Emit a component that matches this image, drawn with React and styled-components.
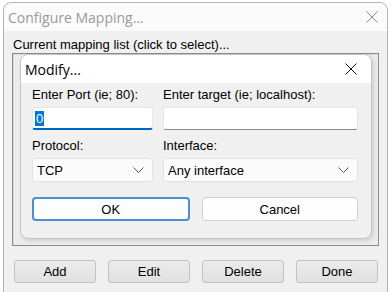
import React from 'react';
import styled, { createGlobalStyle } from 'styled-components';

const GlobalStyle = createGlobalStyle`
  html, body {
    margin: 0;
    padding: 0;
    background: #ffffff;
    overflow: hidden;
  }
`;

const Screen = styled.div`
  width: 392px;
  height: 292px;
  padding: 2px 0 0 3px;
  box-sizing: border-box;
  background: #ffffff;
  overflow: hidden;
`;

const Window = styled.div`
  position: relative;
  width: 385px;
  height: 300px;
  box-sizing: border-box;
  border: 1px solid #b4b4b4;
  border-radius: 8px 8px 0 0;
  background: #f0f0f0;
  font-family: 'Liberation Sans', Arial, sans-serif;
  color: #000;
`;

const TitleBar = styled.div`
  height: 28px;
  display: flex;
  align-items: center;
  justify-content: space-between;
  padding: 0 9px 0 4px;
  background: #fbfbfb;
  border-radius: 8px 8px 0 0;
`;

const Title = styled.span`
  font-family: 'Open Sans', 'Noto Sans', sans-serif;
  font-size: 14px;
  color: ${p => p.$dim ? '#9a9a9a' : '#000'};
`;

const CloseIcon = ({ color }) => (
  <svg width="12" height="12" viewBox="0 0 12 12">
    <path d="M0.5 0.5 L11.5 11.5 M11.5 0.5 L0.5 11.5" stroke={color} strokeWidth="1" fill="none" />
  </svg>
);

const Body = styled.div`
  padding: 6px 8px 0 8px;
`;

const Caption = styled.div`
  font-size: 13px;
  line-height: 15px;
  height: 16px;
  padding-left: 1px;
`;

const ListBox = styled.div`
  height: 193px;
  box-sizing: border-box;
  border: 1px solid #8c8c8c;
  box-shadow: inset 1px 1px 0 #d8d8d8;
  background: #ececec;
`;

const Dialog = styled.div`
  position: absolute;
  left: 16px;
  top: 51px;
  width: 352px;
  height: 185px;
  box-sizing: border-box;
  border: 1px solid #c4c4c4;
  border-radius: 8px;
  background: #f0f0f0;
  overflow: hidden;
  box-shadow: 2px 2px 4px rgba(0, 0, 0, 0.12);
`;

const DialogTitle = styled.div`
  height: 28px;
  display: flex;
  align-items: center;
  justify-content: space-between;
  padding: 0 14px 0 4px;
  background: #ffffff;
`;

const Form = styled.div`
  display: grid;
  grid-template-columns: 121px 195px;
  column-gap: 10px;
  padding: 4px 0 0 11px;
`;

const Field = styled.div`
  display: flex;
  flex-direction: column;
`;

const Label = styled.label`
  font-size: 13px;
  line-height: 15px;
  height: 20px;
`;

const TextBox = styled.div`
  height: 23px;
  box-sizing: border-box;
  background: #ffffff;
  border: 1px solid #e6e6e6;
  border-bottom: ${p => p.$focused ? '2px solid #0067c0' : '1px solid #8a8a8a'};
  border-radius: 3px;
  padding: 3px 2px;
  font-size: 13px;
  line-height: 15px;
  margin-bottom: 8px;
`;

const Selected = styled.span`
  background: #0078d7;
  color: #ffffff;
  padding: 0 1px;
`;

const Select = styled.div`
  height: 24px;
  box-sizing: border-box;
  display: flex;
  align-items: center;
  justify-content: space-between;
  padding: 0 8px 0 4px;
  background: #fbfbfb;
  border: 1px solid #e2e2e2;
  border-radius: 3px;
  font-size: 13px;
  margin-bottom: 15px;
`;

const Chevron = () => (
  <svg width="11" height="6" viewBox="0 0 11 6">
    <path d="M0.5 0.5 L5.5 5.5 L10.5 0.5" stroke="#555" strokeWidth="1" fill="none" />
  </svg>
);

const ButtonRow = styled.div`
  grid-column: 1 / -1;
  display: flex;
  gap: 12px;
`;

const DialogButton = styled.button`
  width: ${p => p.$w}px;
  height: 24px;
  box-sizing: border-box;
  border: ${p => p.$primary ? '2px solid #4a8fd4' : '1px solid #d0d0d0'};
  border-radius: 4px;
  background: #fdfdfd;
  font-family: 'Liberation Sans', Arial, sans-serif;
  font-size: 13px;
  color: #000;
  padding: 0;
`;

const Footer = styled.div`
  display: flex;
  gap: 12px;
  padding: 14px 0 0 2px;
`;

const FooterButton = styled.button`
  width: 82px;
  height: 23px;
  box-sizing: border-box;
  border: 1px solid #c2c2c2;
  border-radius: 3px;
  background: linear-gradient(#ececec, #e0e0e0);
  font-family: 'Liberation Sans', Arial, sans-serif;
  font-size: 13px;
  color: #000;
  padding: 0;
`;

export default function App() {
  return (
    <>
      <GlobalStyle />
      <Screen>
        <Window>
          <TitleBar>
            <Title $dim>Configure Mapping...</Title>
            <CloseIcon color="#8a8a8a" />
          </TitleBar>
          <Body>
            <Caption>Current mapping list (click to select)...</Caption>
            <ListBox />
            <Footer>
              <FooterButton>Add</FooterButton>
              <FooterButton>Edit</FooterButton>
              <FooterButton>Delete</FooterButton>
              <FooterButton>Done</FooterButton>
            </Footer>
          </Body>
          <Dialog>
            <DialogTitle>
              <Title>Modify...</Title>
              <CloseIcon color="#111" />
            </DialogTitle>
            <Form>
              <Field>
                <Label>Enter Port (ie; 80):</Label>
                <TextBox $focused><Selected>0</Selected></TextBox>
              </Field>
              <Field>
                <Label>Enter target (ie; localhost):</Label>
                <TextBox />
              </Field>
              <Field>
                <Label>Protocol:</Label>
                <Select>TCP<Chevron /></Select>
              </Field>
              <Field>
                <Label>Interface:</Label>
                <Select>Any interface<Chevron /></Select>
              </Field>
              <ButtonRow>
                <DialogButton $primary $w={158}>OK</DialogButton>
                <DialogButton $w={157}>Cancel</DialogButton>
              </ButtonRow>
            </Form>
          </Dialog>
        </Window>
      </Screen>
    </>
  );
}
